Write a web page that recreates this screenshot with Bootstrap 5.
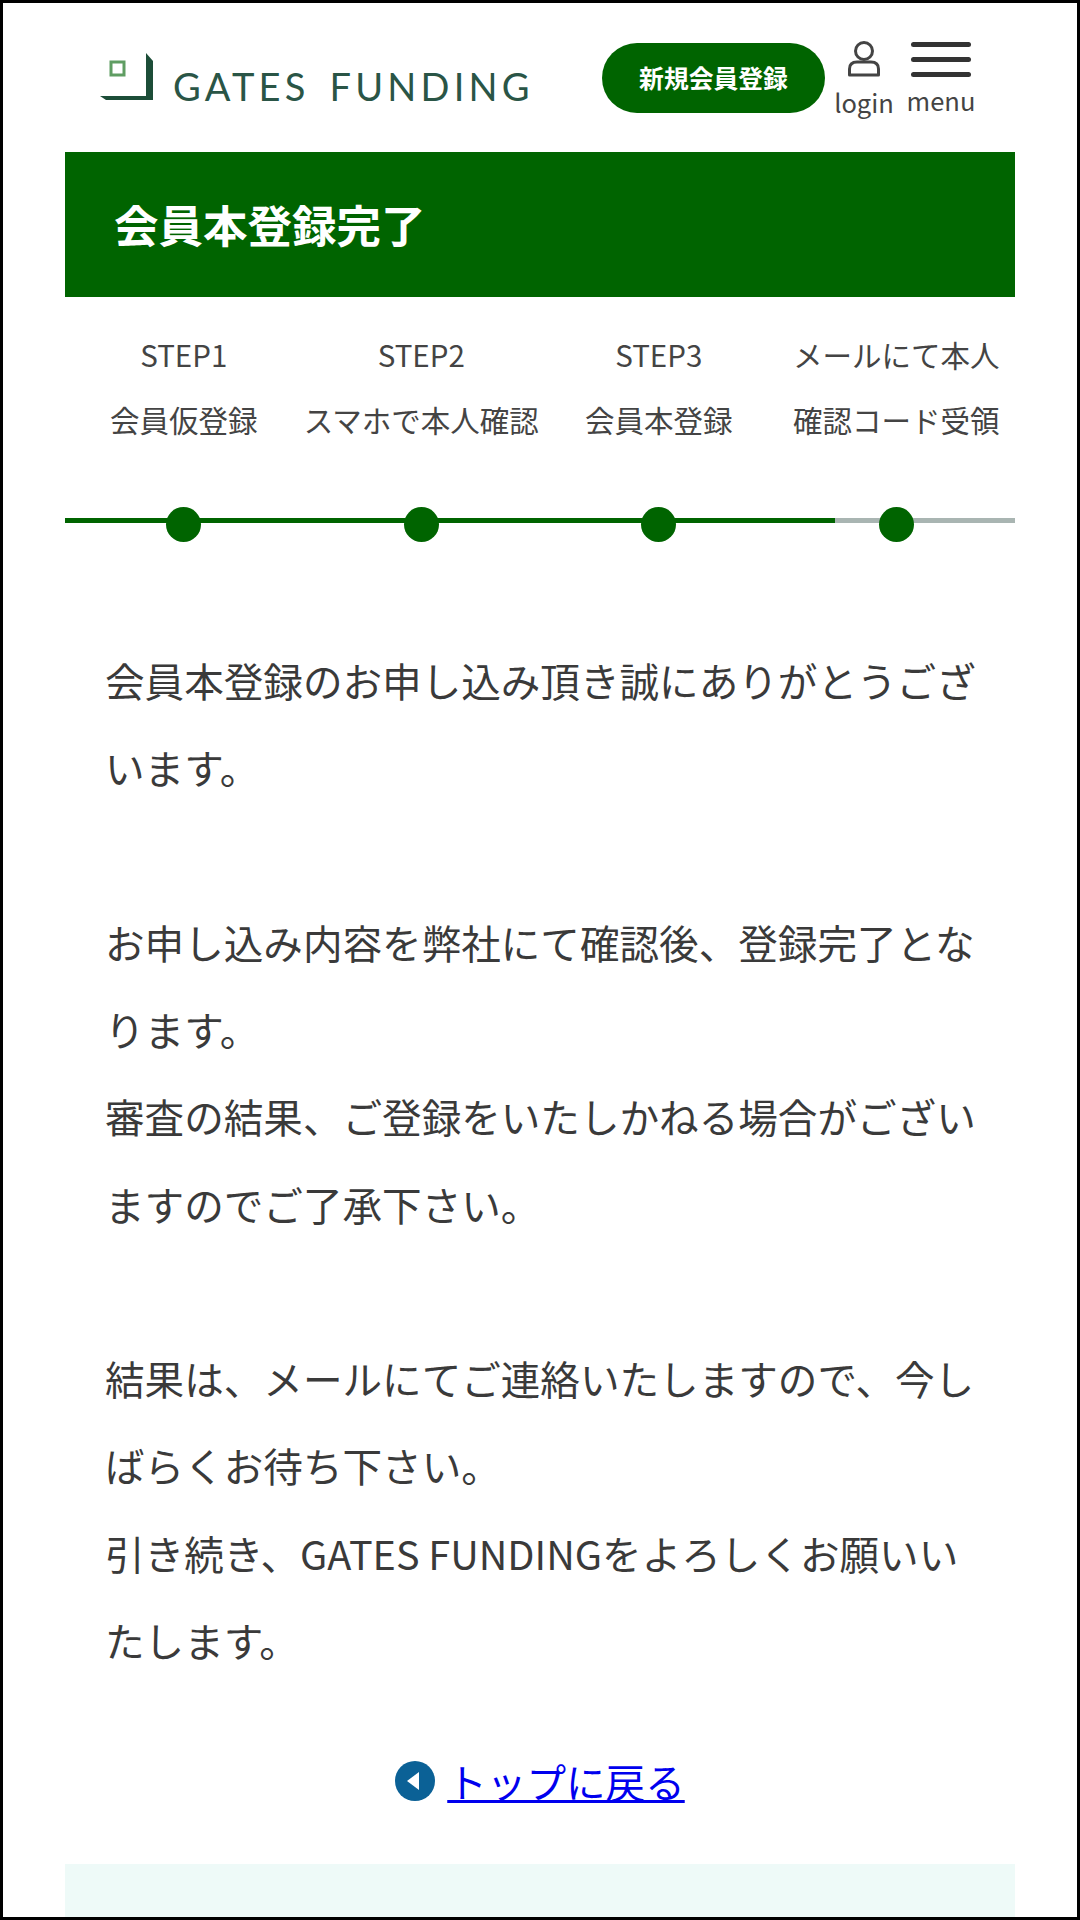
<!DOCTYPE html>
<html lang="ja">
<head>
<meta charset="utf-8">
<title>会員本登録完了</title>
<link href="https://cdn.jsdelivr.net/npm/bootstrap@5.3.0/dist/css/bootstrap.min.css" rel="stylesheet">
<style>
html,body{margin:0;background:#000;}
body{font-family:"Noto Sans CJK JP","Noto Sans",sans-serif;color:#3a3a3a;}
.frame{width:1080px;height:1920px;border:3px solid #000;background:#fff;overflow:hidden;}
.site-head{height:149px;padding:0 101px 0 97px;}
.logo-word{font-family:"Lato",sans-serif;font-weight:400;font-size:38px;letter-spacing:4.2px;word-spacing:6px;color:#2a5546;line-height:1;margin:17px 0 0 19px;white-space:nowrap;}
.reg-btn{width:223px;height:70px;border-radius:35px;background:#006400;color:#fff;font-size:24.8px;font-weight:700;text-decoration:none;margin-left:auto;}
.ico-lbl{font-size:25.5px;line-height:1;color:#444;}
.login-box{width:60px;margin-left:9px;}
.login-lbl{margin-top:4px;}
.menu-box{width:70px;margin-left:12px;}
.bars{width:60px;}
.bars span{display:block;height:5px;border-radius:3px;background:#333;margin-bottom:10px;}
.wrap{padding:0 62px;}
.title-bar{height:145px;background:#006400;color:#fff;font-size:44.5px;font-weight:700;padding:0 0 2px 49px;margin:0;}
.step-lbl{font-size:29.5px;line-height:64.5px;color:#444;text-align:center;white-space:nowrap;}
.step-row{padding-top:25px;}
.track{height:35px;margin-top:52px;background:linear-gradient(#a9b5b2,#a9b5b2) 0 15px/100% 5px no-repeat;}
.track-done{position:absolute;left:0;top:15px;width:770px;height:5px;background:#006400;}
.dot{width:35px;height:35px;border-radius:50%;background:#006400;position:relative;margin-top:4px;}
.msg{font-size:39.6px;line-height:87.25px;padding:98px 30px 0 40px;margin:0;}
.back{font-size:39.6px;line-height:1.3;margin-top:72px;}
.back a{color:#0000ee;text-decoration:underline;}
.back-ico{margin-right:12px;}
.foot-band{height:100px;background:#eefaf8;margin-top:58px;}
</style>
</head>
<body>
<div class="frame">
  <header class="site-head d-flex align-items-center">
    <svg width="54" height="48" viewBox="0 0 54 48" style="margin-top:-2px" aria-hidden="true">
      <path d="M46 0 L53 8 V46 H46 Z" fill="#1c4d38"/>
      <path d="M0 43 H53 V47 H6 Z" fill="#1c4d38"/>
      <rect x="11" y="9" width="13" height="13" fill="none" stroke="#5f9d62" stroke-width="3"/>
    </svg>
    <div class="logo-word">GATES FUNDING</div>
    <a href="#" class="reg-btn d-flex align-items-center justify-content-center">新規会員登録</a>
    <div class="login-box d-flex flex-column align-items-center">
      <svg width="32" height="36" viewBox="0 0 32 36" aria-hidden="true" class="mb-2">
        <circle cx="16" cy="10" r="8.5" fill="none" stroke="#444" stroke-width="3"/>
        <path d="M9 21 H23 Q30.500 21 30.500 28 V34 H1.500 V28 Q1.500 21 9 21 Z" fill="none" stroke="#444" stroke-width="3" stroke-linejoin="round"/>
      </svg>
      <div class="ico-lbl login-lbl">login</div>
    </div>
    <div class="menu-box d-flex flex-column align-items-center">
      <div class="bars"><span></span><span></span><span></span></div>
      <div class="ico-lbl">menu</div>
    </div>
  </header>
  <main class="wrap">
    <h1 class="title-bar d-flex align-items-center">会員本登録完了</h1>
    <div class="row g-0 step-row">
      <div class="col-3 step-lbl">STEP1<br>会員仮登録</div>
      <div class="col-3 step-lbl">STEP2<br>スマホで本人確認</div>
      <div class="col-3 step-lbl">STEP3<br>会員本登録</div>
      <div class="col-3 step-lbl">メールにて本人<br>確認コード受領</div>
    </div>
    <div class="track position-relative row g-0">
      <div class="track-done"></div>
      <div class="col-3 d-flex justify-content-center"><div class="dot"></div></div>
      <div class="col-3 d-flex justify-content-center"><div class="dot"></div></div>
      <div class="col-3 d-flex justify-content-center"><div class="dot"></div></div>
      <div class="col-3 d-flex justify-content-center"><div class="dot"></div></div>
    </div>
    <p class="msg">会員本登録のお申し込み頂き誠にありがとうございます。<br><br>お申し込み内容を弊社にて確認後、登録完了となります。<br>審査の結果、ご登録をいたしかねる場合がございますのでご了承下さい。<br><br>結果は、メールにてご連絡いたしますので、今しばらくお待ち下さい。<br>引き続き、GATES FUNDINGをよろしくお願いいたします。</p>
    <div class="back d-flex align-items-center justify-content-center">
      <svg width="40" height="40" viewBox="0 0 40 40" class="back-ico" aria-hidden="true">
        <circle cx="20" cy="20" r="20" fill="#0b6196"/>
        <path d="M24 11 V29 L12 20 Z" fill="#fff"/>
      </svg>
      <a href="#">トップに戻る</a>
    </div>
    <div class="foot-band"></div>
  </main>
</div>
<script src="https://cdn.jsdelivr.net/npm/bootstrap@5.3.0/dist/js/bootstrap.bundle.min.js"></script>
</body>
</html>
